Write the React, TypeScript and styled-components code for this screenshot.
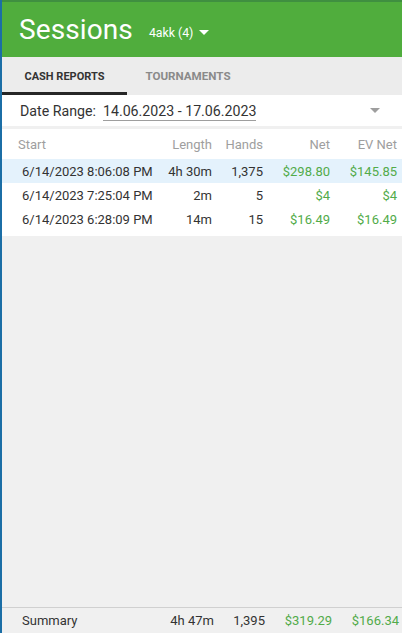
import * as React from "react";
import styled, { createGlobalStyle } from "styled-components";

const GlobalStyle = createGlobalStyle`
  html, body, #root {
    margin: 0;
    padding: 0;
    height: 100%;
  }
  body {
    font-family: Roboto, "Liberation Sans", sans-serif;
    background: #f0f0f0;
  }
`;

const Page = styled.div`
  display: flex;
  flex-direction: column;
  height: 100vh;
  border-left: 2px solid #1b6ea6;
  box-sizing: border-box;
  background: #f0f0f0;
  overflow: hidden;
`;

const TopBar = styled.div`
  display: flex;
  align-items: center;
  height: 57px;
  padding: 0 0 0 17px;
  background: #50ad3d;
  border-top: 2px solid #3f8f40;
  box-sizing: border-box;
  color: #fff;
`;

const Title = styled.h1`
  margin: 0 16px 0 0;
  font-size: 28px;
  font-weight: 400;
  letter-spacing: 0.1px;
`;

const Account = styled.div`
  display: flex;
  align-items: center;
  gap: 6px;
  margin-top: 6px;
  font-size: 12.3px;
`;

const Caret = styled.span<{ color: string }>`
  width: 0;
  height: 0;
  border-left: 5px solid transparent;
  border-right: 5px solid transparent;
  border-top: 5px solid ${(p) => p.color};
`;

const Tabs = styled.div`
  display: flex;
  height: 38px;
  background: #ececec;
`;

const Tab = styled.div<{ active?: boolean }>`
  display: flex;
  align-items: center;
  justify-content: center;
  width: ${(p) => (p.active ? "125px" : "122px")};
  font-size: ${(p) => (p.active ? "11px" : "11.6px")};
  font-weight: 700;
  text-transform: uppercase;
  color: ${(p) => (p.active ? "#333" : "#8a8a8a")};
  border-bottom: 3px solid ${(p) => (p.active ? "#262626" : "transparent")};
  box-sizing: border-box;
  padding-top: 3px;
`;

const Filter = styled.div`
  display: flex;
  align-items: center;
  height: 31px;
  padding: 0 22px 0 18px;
  background: #fff;
  font-size: 14.2px;
  color: #333;
`;

const Label = styled.span`
  margin-right: 7px;
`;

const Range = styled.span`
  flex: 1;
  span {
    border-bottom: 1px solid #9e9e9e;
    padding-bottom: 1px;
  }
`;

const TableBox = styled.div`
  margin-top: 3px;
  background: #fff;
  padding-bottom: 5px;
`;

const Row = styled.div<{ selected?: boolean; head?: boolean }>`
  display: grid;
  grid-template-columns: 144px 50px 51px 67px 67px;
  align-items: center;
  height: ${(p) => (p.head ? "30px" : "24px")};
  padding-left: 16px;
  background: ${(p) => (p.selected ? "#e4f2fc" : "transparent")};
  font-size: 13px;
  color: ${(p) => (p.head ? "#9e9e9e" : "#333")};
`;

const Cell = styled.div<{ right?: boolean; money?: boolean; indent?: boolean }>`
  text-align: ${(p) => (p.right ? "right" : "left")};
  padding-left: ${(p) => (p.indent ? "4px" : "0")};
  color: ${(p) => (p.money ? "#52ab4a" : "inherit")};
  white-space: nowrap;
`;

const Spacer = styled.div`
  flex: 1;
`;

const Summary = styled.div`
  display: grid;
  grid-template-columns: 146px 50px 51px 67px 67px;
  align-items: center;
  height: 25px;
  padding-left: 16px;
  border-top: 1px solid #d0d0d0;
  font-size: 13px;
  color: #333;
`;

type Session = {
  start: string;
  length: string;
  hands: string;
  net: string;
  ev: string;
};

const sessions: Session[] = [
  { start: "6/14/2023 8:06:08 PM", length: "4h 30m", hands: "1,375", net: "$298.80", ev: "$145.85" },
  { start: "6/14/2023 7:25:04 PM", length: "2m", hands: "5", net: "$4", ev: "$4" },
  { start: "6/14/2023 6:28:09 PM", length: "14m", hands: "15", net: "$16.49", ev: "$16.49" },
];

export default function App() {
  return (
    <>
      <GlobalStyle />
      <Page>
        <TopBar>
          <Title>Sessions</Title>
          <Account>
            4akk (4) <Caret color="#fff" />
          </Account>
        </TopBar>
        <Tabs>
          <Tab active>Cash Reports</Tab>
          <Tab>Tournaments</Tab>
        </Tabs>
        <Filter>
          <Label>Date Range:</Label>
          <Range>
            <span>14.06.2023 - 17.06.2023</span>
          </Range>
          <Caret color="#9e9e9e" />
        </Filter>
        <TableBox>
          <Row head>
            <Cell>Start</Cell>
            <Cell right>Length</Cell>
            <Cell right>Hands</Cell>
            <Cell right>Net</Cell>
            <Cell right>EV Net</Cell>
          </Row>
          {sessions.map((s, i) => (
            <Row key={s.start} selected={i === 0}>
              <Cell indent>{s.start}</Cell>
              <Cell right>{s.length}</Cell>
              <Cell right>{s.hands}</Cell>
              <Cell right money>{s.net}</Cell>
              <Cell right money>{s.ev}</Cell>
            </Row>
          ))}
        </TableBox>
        <Spacer />
        <Summary>
          <Cell indent>Summary</Cell>
          <Cell right>4h 47m</Cell>
          <Cell right>1,395</Cell>
          <Cell right money>$319.29</Cell>
          <Cell right money>$166.34</Cell>
        </Summary>
      </Page>
    </>
  );
}
